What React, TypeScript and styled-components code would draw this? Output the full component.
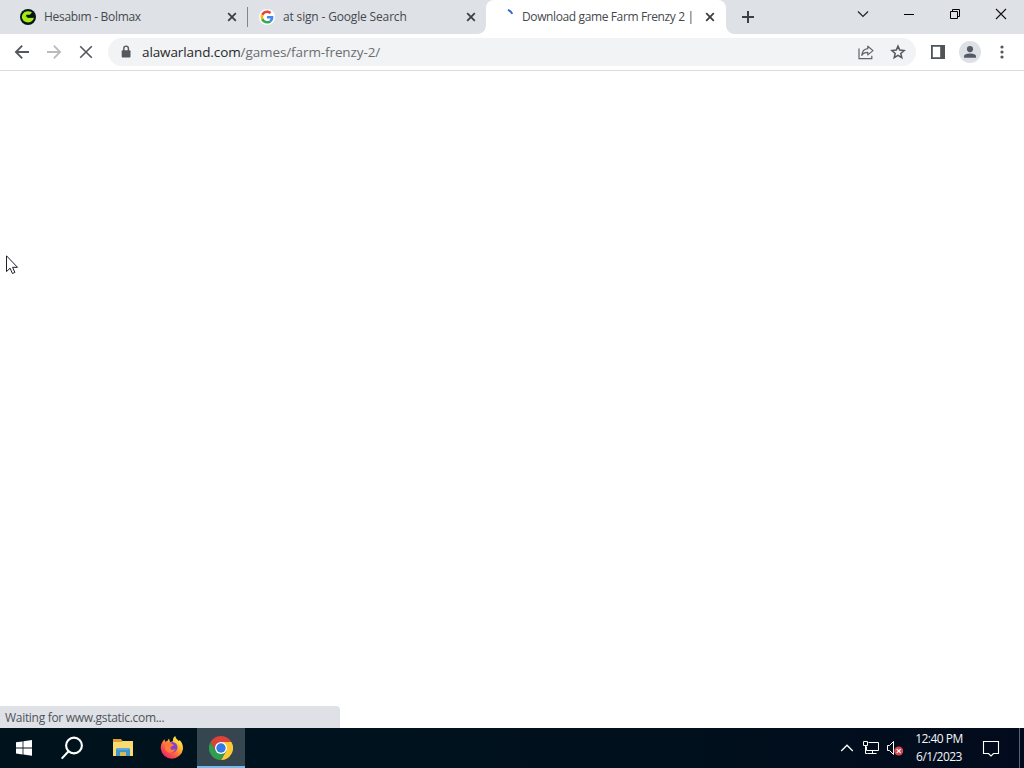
import React from "react";
import styled, { createGlobalStyle } from "styled-components";

const GlobalStyle = createGlobalStyle`
  * {
    box-sizing: border-box;
  }
  body {
    margin: 0;
    overflow: hidden;
    font-family: "Open Sans", "Noto Sans", sans-serif;
  }
  svg {
    display: block;
    flex: none;
  }
`
const Screen = styled.div`
  position: relative;
  display: flex;
  flex-direction: column;
  width: 1024px;
  height: 768px;
  background: #fff;
`
const TabStrip = styled.header`
  display: flex;
  height: 34px;
  padding-left: 8px;
  background: #dee1e6;
`
const Tab = styled.div<{ $active?: boolean }>`
  position: relative;
  display: flex;
  align-items: center;
  width: ${({ $active }) => ($active ? 240 : 239)}px;
  padding: 0 ${({ $active }) => ($active ? 8 : 7)}px 0 12px;
  background: ${({ $active }) => ($active ? "#fff" : "transparent")};
  border-radius: 8px 8px 0 0;

  &::before,
  &::after {
    content: "";
    display: ${({ $active }) => ($active ? "block" : "none")};
    position: absolute;
    bottom: 0;
    width: 8px;
    height: 8px;
  }
  &::before {
    left: -8px;
    background: radial-gradient(circle at 0 0, transparent 7.5px, #fff 8px);
  }
  &::after {
    right: -8px;
    background: radial-gradient(circle at 100% 0, transparent 7.5px, #fff 8px);
  }
`
const TabTitle = styled.span<{ $spacing: number }>`
  width: 172px;
  margin: 0 auto 0 8px;
  overflow: hidden;
  white-space: nowrap;
  font-size: 12px;
  line-height: 18px;
  letter-spacing: ${({ $spacing }) => $spacing}px;
  color: #45494d;
`
const TabDivider = styled.span`
  align-self: center;
  width: 1px;
  height: 20px;
  margin: 0 -1px 0 0;
  background: #80868b;
`
const NewTab = styled.div`
  display: flex;
  align-items: center;
  margin-left: 14px;
`
const WindowControls = styled.div`
  display: flex;
  height: 28px;
  margin-left: auto;
`
const ControlButton = styled.div`
  display: flex;
  align-items: center;
  justify-content: center;
  width: 46px;
`
const Toolbar = styled.nav`
  display: flex;
  align-items: center;
  height: 37px;
  padding: 0 6px;
  border-bottom: 1px solid #dadce0;
`
const ToolButton = styled.div`
  display: flex;
  align-items: center;
  justify-content: center;
  width: 32px;
  height: 28px;
`
const Omnibox = styled.div`
  display: flex;
  align-items: center;
  width: 808px;
  height: 28px;
  margin: 0 6px;
  padding: 0 2px 0 10px;
  border-radius: 14px;
  background: #f1f3f4;
`
const Url = styled.span`
  flex: 1;
  margin-left: 8px;
  font-size: 13.5px;
  line-height: 20px;
  letter-spacing: -0.1px;
  white-space: nowrap;
  color: #6a6e73;
`
const Host = styled.span`
  color: #26282b;
`
const Avatar = styled.div`
  display: flex;
  align-items: center;
  justify-content: center;
  width: 22px;
  height: 22px;
  border-radius: 50%;
  background: #dde1e6;
`
const Page = styled.main`
  display: flex;
  flex: 1;
  align-items: flex-end;
`
const StatusBubble = styled.div`
  width: 340px;
  height: 22px;
  padding-left: 5px;
  border-radius: 0 4px 0 0;
  background: #dee1e6;
  font-size: 12px;
  line-height: 23px;
  letter-spacing: -0.3px;
  color: #50545a;
`
const Taskbar = styled.footer`
  display: flex;
  height: 40px;
  background: linear-gradient(90deg, #00131d, #00111d 60%, #020b1d);
`
const TaskButton = styled.div<{ $gap?: number; $active?: boolean }>`
  display: flex;
  align-items: center;
  justify-content: center;
  width: 48px;
  margin-left: ${({ $gap = 0 }) => $gap}px;
  background: ${({ $active }) => ($active ? "#354650" : "transparent")};
  box-shadow: ${({ $active }) => ($active ? "inset 0 -2px #76b9ed" : "none")};
`
const Tray = styled.div`
  display: flex;
  align-items: center;
  margin-left: auto;
`
const TrayIcon = styled.div`
  display: flex;
  justify-content: center;
  width: 24px;
`
const Clock = styled.div`
  width: 64px;
  font-size: 12px;
  line-height: 18px;
  letter-spacing: -0.5px;
  text-align: center;
  color: #f4f6f8;
`
const Notifications = styled.div`
  display: flex;
  justify-content: center;
  width: 39px;
`
const ShowDesktop = styled.div`
  width: 5px;
  height: 40px;
  margin-left: 9px;
  border-left: 1px solid #5a626c;
`
const Pointer = styled.div`
  position: absolute;
  top: 255px;
  left: 6px;
`

const CloseIcon = () => (
  <svg width="16" height="16" viewBox="0 0 16 16" stroke="#3c4043" strokeWidth="1.8">
    <path d="M4.2 4.2l7.6 7.6M11.8 4.2l-7.6 7.6" />
  </svg>
);

const BolmaxIcon = () => (
  <svg width="16" height="16" viewBox="0 0 16 16">
    <circle cx="8" cy="8" r="8" fill="#07141b" />
    <path d="M12 3.6A6.1 5.6 0 1 0 14 8.8H7.6l.6-1.4H5.6l1-1.6h3.2z" fill="#a5ec14" />
    <path d="M7.5 6.2h7L13.5 8.6H6.8z" fill="#07141b" />
  </svg>
);

const GoogleIcon = () => (
  <svg width="16" height="16" viewBox="0 0 48 48">
    <circle cx="24" cy="24" r="24" fill="#fff" />
    <g transform="translate(4.5 4.5) scale(.82)">
      <path fill="#EA4335" d="M24 9.5c3.5 0 6.7 1.2 9.2 3.6l6.9-6.9C35.9 2.4 30.5 0 24 0 14.6 0 6.5 5.4 2.6 13.2l8 6.2C12.4 13.7 17.7 9.5 24 9.5z" />
      <path fill="#4285F4" d="M47 24.6c0-1.6-.2-3.1-.4-4.6H24v9h12.9c-.6 3-2.2 5.5-4.7 7.2l7.7 6C44.4 38 47 31.8 47 24.6z" />
      <path fill="#FBBC05" d="M10.5 28.6a14.5 14.5 0 0 1 0-9.2l-8-6.2a24 24 0 0 0 0 21.6z" />
      <path fill="#34A853" d="M24 48c6.5 0 11.9-2.1 15.9-5.8l-7.7-6c-2.2 1.5-4.9 2.3-8.2 2.3-6.3 0-11.6-4.2-13.5-9.9l-8 6.2C6.5 42.6 14.6 48 24 48z" />
    </g>
  </svg>
);

const SpinnerIcon = () => (
  <svg width="16" height="16" viewBox="0 0 16 16">
    <path d="M10 .9a8 8 0 0 1 4.3 4" fill="none" stroke="#3565d0" strokeWidth="2" />
  </svg>
);

const ArrowIcon = ({ color, flip }: { color: string; flip?: boolean }) => (
  <svg width="18" height="18" viewBox="0 0 18 18" fill="none" stroke={color} strokeWidth="1.8">
    <path d="M16 9H3M9.2 2.7L2.9 9l6.3 6.3" transform={flip ? "matrix(-1 0 0 1 18 0)" : undefined} />
  </svg>
);

const LockIcon = () => (
  <svg width="16" height="16" viewBox="0 0 16 16">
    <rect x="3.7" y="6.2" width="8.8" height="7.2" rx="1" fill="#54585c" />
    <path d="M5.8 7V4.4a2.3 2.3 0 0 1 4.6 0V7" fill="none" stroke="#54585c" strokeWidth="1.4" />
  </svg>
);

const ShareIcon = () => (
  <svg width="18" height="18" viewBox="0 0 18 18" fill="none" stroke="#5f6368" strokeWidth="1.2">
    <path d="M2 5.5v10.1h12.8v-2.8" />
    <path d="M10.8 3.2L16 7.6l-5.2 4.3V9.4c-2.9-.1-4.8.8-6 3 .3-3.6 2.3-6.4 6-6.7z" strokeLinejoin="round" />
  </svg>
);

const StarIcon = () => (
  <svg width="18" height="18" viewBox="0 0 18 18" fill="none" stroke="#54585c" strokeWidth="1.5">
    <path d="M9 3.1l1.7 4 4.4.4-3.3 2.9 1 4.3L9 12.4l-3.8 2.3 1-4.3-3.3-2.9 4.4-.4z" />
  </svg>
);

const SidePanelIcon = () => (
  <svg width="14" height="14" viewBox="0 0 14 14">
    <path d="M0 0h14v14H0zM1.8 1.8v10.4h7.4V1.8z" fill="#505357" fillRule="evenodd" />
  </svg>
);

const PersonIcon = () => (
  <svg width="14" height="14" viewBox="0 0 14 14" fill="#545a66">
    <circle cx="7" cy="4.1" r="3.1" />
    <path d="M1 12.8v-1.6C1 9.4 4.2 8.6 7 8.6s6 .8 6 2.6v1.6z" />
  </svg>
);

const ExplorerIcon = () => (
  <svg width="22" height="20" viewBox="0 0 22 20">
    <path d="M1 1h8l1.5 2H21v4H1z" fill="#dba02d" />
    <path d="M1 4h8l2-1h10v15H1z" fill="#fadb72" />
    <path d="M4 18v-6.2q0-1.8 1.8-1.8h10.4q1.8 0 1.8 1.8V18h-4v-3.5H8V18z" fill="#4295cb" />
    <path d="M8 14.5h6V18H8z" fill="#e2b94d" />
    <path d="M5.5 10h11v2h-11z" fill="#5baadb" />
  </svg>
);

const FirefoxIcon = () => (
  <svg width="24" height="24" viewBox="0 0 24 24">
    <defs>
      <linearGradient id="fox" x1="0.85" y1="0.1" x2="0.2" y2="0.9">
        <stop offset="0" stopColor="#fff34a" />
        <stop offset="0.35" stopColor="#ffb333" />
        <stop offset="0.65" stopColor="#ff633f" />
        <stop offset="1" stopColor="#ed2866" />
      </linearGradient>
    </defs>
    <path d="M3 5l1.5-1.7.7 2.4 2.1-.8L9 2.5l1 3.5 3-.8c-.3-2 .4-3.8 2.2-5.1.6 2.5 2.2 3.6 3.8 5.2l.7-1.4c2.3 2.4 3.5 5.4 3.3 9A11.2 11.2 0 0 1 .8 13C.5 9.8 1.4 7.1 3 5z" fill="url(#fox)" />
    <circle cx="12.3" cy="11.2" r="5.2" fill="#8743c5" />
    <path d="M4 7c3-2 5.5-1.3 7.5.8L14 9c-.9 1.5-3.2 1-3.5 2.4-.4 2 2.2 3.3 5 1.7-1.3 4.3-7.4 4.8-9.8 1.2C4.9 12.4 5.2 9.2 4 7z" fill="#ff7a3b" />
  </svg>
);

const ChromeIcon = () => (
  <svg width="24" height="24" viewBox="0 0 24 24">
    <path d="M12 6h10.4A12 12 0 0 1 12 24l5.2-9z" fill="#fbc934" />
    <path d="M1.6 6A12 12 0 0 1 22.4 6H12l-5.2 9z" fill="#dc4338" />
    <path d="M1.6 6l5.2 9 5.2 3 5.2-3L12 24A12 12 0 0 1 1.6 6z" fill="#319e4f" />
    <circle cx="12" cy="12" r="6" fill="#fff" />
    <circle cx="12" cy="12" r="4.7" fill="#347ae5" />
  </svg>
);

const App: React.FC = () => {
  return (
    <Screen>
      <GlobalStyle />
      <TabStrip>
        <Tab>
          <BolmaxIcon />
          <TabTitle $spacing={-0.3}>Hesabım - Bolmax</TabTitle>
          <CloseIcon />
        </Tab>
        <TabDivider />
        <Tab>
          <GoogleIcon />
          <TabTitle $spacing={-0.16}>at sign - Google Search</TabTitle>
          <CloseIcon />
        </Tab>
        <Tab $active>
          <SpinnerIcon />
          <TabTitle $spacing={-0.38}>Download game Farm Frenzy 2 |</TabTitle>
          <CloseIcon />
        </Tab>
        <NewTab>
          <svg width="16" height="16" viewBox="0 0 16 16" stroke="#3c4043" strokeWidth="2">
            <path d="M8 2v12M2 8h12" />
          </svg>
        </NewTab>
        <WindowControls>
          <ControlButton>
            <svg width="12" height="12" viewBox="0 0 12 12" fill="none" stroke="#222" strokeWidth="1.2">
              <path d="M1 3.5l5 5 5-5" />
            </svg>
          </ControlButton>
          <ControlButton>
            <svg width="10" height="12" viewBox="0 0 10 12">
              <path d="M0 6h10v1H0z" />
            </svg>
          </ControlButton>
          <ControlButton>
            <svg width="10" height="10" viewBox="0 0 10 10" fill="none" stroke="#000">
              <path d="M.5 2.5h7v7h-7zM2.5 2.5v-2h7v7h-2" />
            </svg>
          </ControlButton>
          <ControlButton>
            <svg width="12" height="12" viewBox="0 0 12 12" stroke="#111" strokeWidth="1.1">
              <path d="M1 1l10 10M11 1L1 11" />
            </svg>
          </ControlButton>
        </WindowControls>
      </TabStrip>

      <Toolbar>
        <ToolButton><ArrowIcon color="#54585c" /></ToolButton>
        <ToolButton><ArrowIcon color="#b9bbbe" flip /></ToolButton>
        <ToolButton>
          <svg width="14" height="14" viewBox="0 0 14 14" stroke="#54585c" strokeWidth="1.6">
            <path d="M1.2 1.2l11.6 11.6M12.8 1.2L1.2 12.8" />
          </svg>
        </ToolButton>
        <Omnibox>
          <LockIcon />
          <Url><Host>alawarland.com</Host>/games/farm-frenzy-2/</Url>
          <ToolButton><ShareIcon /></ToolButton>
          <ToolButton><StarIcon /></ToolButton>
        </Omnibox>
        <ToolButton><SidePanelIcon /></ToolButton>
        <ToolButton>
          <Avatar><PersonIcon /></Avatar>
        </ToolButton>
        <ToolButton>
          <svg width="4" height="14" viewBox="0 0 4 14" fill="#54585c">
            <circle cx="2" cy="2" r="1.6" />
            <circle cx="2" cy="7" r="1.6" />
            <circle cx="2" cy="12" r="1.6" />
          </svg>
        </ToolButton>
      </Toolbar>

      <Page>
        <StatusBubble>Waiting for www.gstatic.com...</StatusBubble>
      </Page>

      <Taskbar>
        <TaskButton>
          <svg width="16" height="16" viewBox="0 0 16 16" fill="#fff">
            <path d="M0 2.3l6.6-.9v6.1H0zM7.4 1.3L16 .1v7.4H7.4zM0 8.4h6.6v6.1L0 13.6zM7.4 8.4H16v7.4l-8.6-1.2z" />
          </svg>
        </TaskButton>
        <TaskButton>
          <svg width="24" height="24" viewBox="0 0 24 24" fill="none" stroke="#fff" strokeWidth="2.1">
            <circle cx="14" cy="9.5" r="7.9" />
            <path d="M8.6 15.2L1.7 22.6" />
          </svg>
        </TaskButton>
        <TaskButton $gap={3}><ExplorerIcon /></TaskButton>
        <TaskButton $gap={1}><FirefoxIcon /></TaskButton>
        <TaskButton $gap={1} $active><ChromeIcon /></TaskButton>
        <Tray>
          <TrayIcon>
            <svg width="14" height="10" viewBox="0 0 14 10" fill="none" stroke="#fff" strokeWidth="1.3">
              <path d="M1.2 8L7 2.2 12.8 8" />
            </svg>
          </TrayIcon>
          <TrayIcon>
            <svg width="16" height="16" viewBox="0 0 16 16" fill="none" stroke="#fff">
              <path d="M5.5 2.5h10v8h-12v-4M9.5 10.5v3M4.5 13.5h9" />
              <path d="M.5 1.5h4v4h-4zM2.5 5.5v8h2" />
            </svg>
          </TrayIcon>
          <TrayIcon>
            <svg width="18" height="16" viewBox="0 0 18 16">
              <path d="M1.5 5.5h2l4-4v13l-4-4h-2z" fill="none" stroke="#fff" />
              <circle cx="12.7" cy="11" r="4.5" fill="#d9474e" />
              <path d="M10.8 9.1l3.8 3.8M14.6 9.1l-3.8 3.8" stroke="#fff" strokeWidth="1.2" />
            </svg>
          </TrayIcon>
          <Clock>
            <div>12:40 PM</div>
            <div>6/1/2023</div>
          </Clock>
          <Notifications>
            <svg width="18" height="17" viewBox="0 0 18 17" fill="none" stroke="#fff" strokeWidth="1.1">
              <path d="M1.5 1.5h15v12h-5L9 16l-2.5-2.5h-5z" />
            </svg>
          </Notifications>
          <ShowDesktop />
        </Tray>
      </Taskbar>

      <Pointer>
        <svg width="13" height="20" viewBox="0 0 13 20">
          <path d="M.5.8v15.8l3.6-3.4 2.3 5.3 2.5-1.1-2.3-5.1h4.9z" fill="#fff" stroke="#1d1f2b" />
        </svg>
      </Pointer>
    </Screen>
  );
};

export default App;
